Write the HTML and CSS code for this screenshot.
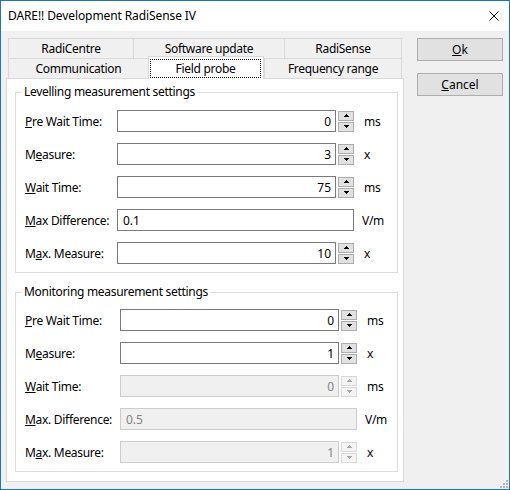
FILE: index.html
```html
<!DOCTYPE html>
<html lang="en">
<head>
  <meta charset="UTF-8">
  <title>DARE!! Development RadiSense IV</title>
  <link rel="stylesheet" href="styles.css">
</head>
<body>
  <div class="window">
    <div class="titlebar">
      <span class="title">DARE!! Development RadiSense IV</span>
      <svg class="close" width="10" height="10" viewBox="0 0 10 10">
        <path d="M0.5 0.5L9.5 9.5M9.5 0.5L0.5 9.5" stroke="#000" stroke-width="1"/>
      </svg>
    </div>

    <div class="client">
      <div class="tabcontrol">
        <div class="tabrow">
          <div class="tab t-radicentre">RadiCentre</div>
          <div class="tab t-software">Software update</div>
          <div class="tab t-radisense">RadiSense</div>
        </div>
        <div class="tabrow">
          <div class="tab t-comm">Communication</div>
          <div class="tab t-probe selected"><span class="focus">Field probe</span></div>
          <div class="tab t-freq">Frequency range</div>
        </div>

        <div class="panel">
          <fieldset class="group levelling">
            <legend>Levelling measurement settings</legend>
            <div class="row">
              <label><u>P</u>re Wait Time:</label>
              <input class="field" value="0">
              <div class="spin">
                <span><svg width="5" height="3"><path d="M2 0h1v1h1v1h1v1H0V2h1V1h1z"/></svg></span>
                <span><svg width="5" height="3"><path d="M0 0h5v1H4v1H3v1H2V2H1V1H0z"/></svg></span>
              </div>
              <span class="unit">ms</span>
            </div>
            <div class="row">
              <label>M<u>e</u>asure:</label>
              <input class="field" value="3">
              <div class="spin">
                <span><svg width="5" height="3"><path d="M2 0h1v1h1v1h1v1H0V2h1V1h1z"/></svg></span>
                <span><svg width="5" height="3"><path d="M0 0h5v1H4v1H3v1H2V2H1V1H0z"/></svg></span>
              </div>
              <span class="unit">x</span>
            </div>
            <div class="row">
              <label><u>W</u>ait Time:</label>
              <input class="field" value="75">
              <div class="spin">
                <span><svg width="5" height="3"><path d="M2 0h1v1h1v1h1v1H0V2h1V1h1z"/></svg></span>
                <span><svg width="5" height="3"><path d="M0 0h5v1H4v1H3v1H2V2H1V1H0z"/></svg></span>
              </div>
              <span class="unit">ms</span>
            </div>
            <div class="row">
              <label><u>M</u>ax Difference:</label>
              <input class="field wide" value="0.1">
              <span class="unit">V/m</span>
            </div>
            <div class="row">
              <label>M<u>a</u>x. Measure:</label>
              <input class="field" value="10">
              <div class="spin">
                <span><svg width="5" height="3"><path d="M2 0h1v1h1v1h1v1H0V2h1V1h1z"/></svg></span>
                <span><svg width="5" height="3"><path d="M0 0h5v1H4v1H3v1H2V2H1V1H0z"/></svg></span>
              </div>
              <span class="unit">x</span>
            </div>
          </fieldset>

          <fieldset class="group monitoring">
            <legend>Monitoring measurement settings</legend>
            <div class="row">
              <label><u>P</u>re Wait Time:</label>
              <input class="field" value="0">
              <div class="spin">
                <span><svg width="5" height="3"><path d="M2 0h1v1h1v1h1v1H0V2h1V1h1z"/></svg></span>
                <span><svg width="5" height="3"><path d="M0 0h5v1H4v1H3v1H2V2H1V1H0z"/></svg></span>
              </div>
              <span class="unit">ms</span>
            </div>
            <div class="row">
              <label>M<u>e</u>asure:</label>
              <input class="field" value="1">
              <div class="spin">
                <span><svg width="5" height="3"><path d="M2 0h1v1h1v1h1v1H0V2h1V1h1z"/></svg></span>
                <span><svg width="5" height="3"><path d="M0 0h5v1H4v1H3v1H2V2H1V1H0z"/></svg></span>
              </div>
              <span class="unit">x</span>
            </div>
            <div class="row">
              <label><u>W</u>ait Time:</label>
              <input class="field" value="0" disabled>
              <div class="spin off">
                <span><svg width="5" height="3"><path d="M2 0h1v1h1v1h1v1H0V2h1V1h1z"/></svg></span>
                <span><svg width="5" height="3"><path d="M0 0h5v1H4v1H3v1H2V2H1V1H0z"/></svg></span>
              </div>
              <span class="unit">ms</span>
            </div>
            <div class="row">
              <label><u>M</u>ax. Difference:</label>
              <input class="field wide" value="0.5" disabled>
              <span class="unit">V/m</span>
            </div>
            <div class="row">
              <label>M<u>a</u>x. Measure:</label>
              <input class="field" value="1" disabled>
              <div class="spin off">
                <span><svg width="5" height="3"><path d="M2 0h1v1h1v1h1v1H0V2h1V1h1z"/></svg></span>
                <span><svg width="5" height="3"><path d="M0 0h5v1H4v1H3v1H2V2H1V1H0z"/></svg></span>
              </div>
              <span class="unit">x</span>
            </div>
          </fieldset>
        </div>
      </div>

      <div class="actions">
        <button type="button"><u>O</u>k</button>
        <button type="button"><u>C</u>ancel</button>
      </div>
    </div>

    <svg class="grip" width="9" height="9" viewBox="0 0 9 9">
      <g fill="#b4b4b4">
        <rect x="7" y="1" width="2" height="2"/>
        <rect x="4" y="4" width="2" height="2"/>
        <rect x="7" y="4" width="2" height="2"/>
        <rect x="1" y="7" width="2" height="2"/>
        <rect x="4" y="7" width="2" height="2"/>
        <rect x="7" y="7" width="2" height="2"/>
      </g>
    </svg>
  </div>
</body>
</html>
```

FILE: styles.css
```css
body {
  margin: 0;
  font-family: "Noto Sans", "Open Sans", sans-serif;
  font-size: 12px;
  letter-spacing: -0.3px;
  color: #000;
}

.window {
  position: relative;
  width: 510px;
  height: 490px;
  box-sizing: border-box;
  border: 1px solid #1f74c0;
  background: #f0f0f0;
  display: flex;
  flex-direction: column;
}

.titlebar {
  height: 30px;
  background: #fff;
  display: flex;
  align-items: center;
  justify-content: space-between;
  padding: 0 10px 0 7px;
}

.title {
  line-height: 16px;
  letter-spacing: -0.1px;
}

.client {
  flex: 1;
  display: flex;
  padding: 7px 6px 7px 5px;
}

/* tab control */
.tabcontrol {
  width: 398px;
  display: flex;
  flex-direction: column;
}

.tabrow {
  display: flex;
  height: 20px;
  margin: 0 2px;
}

.tab {
  box-sizing: border-box;
  border: 1px solid #d9d9d9;
  border-right: none;
  border-bottom: none;
  text-align: center;
  line-height: 19px;
  white-space: nowrap;
}

.tab:last-child {
  border-right: 1px solid #d9d9d9;
}

.t-radicentre { width: 125px; }
.t-software { width: 151px; }
.t-radisense { width: 118px; }
.t-comm { width: 140px; }
.t-probe { width: 116px; }
.t-freq { width: 138px; }

.tab.selected {
  position: relative;
  z-index: 1;
  height: 23px;
  margin-top: -2px;
  margin-bottom: -1px;
  background: #fff;
  border-right: 1px solid #d9d9d9;
  padding: 2px 2px 1px 1px;
}

.focus {
  display: block;
  box-sizing: border-box;
  height: 19px;
  line-height: 17px;
  border: 1px dotted #000;
}

.panel {
  flex: 1;
  background: #fff;
  border: 1px solid #d9d9d9;
  padding: 5px 5px 0 8px;
}

/* group boxes */
.group {
  margin: 0;
  border: 1px solid #dcdcdc;
  padding: 10px 0 8px 6px;
}

.group legend {
  padding: 0 2px;
  line-height: 16px;
}

.monitoring {
  margin-top: 11px;
  padding-top: 9px;
}

.row {
  display: flex;
  align-items: center;
  height: 22px;
  padding-left: 3px;
}

.row + .row {
  margin-top: 11px;
}

.row label {
  width: 92px;
  flex: none;
}

.monitoring .row label {
  width: 95px;
}

.field {
  box-sizing: border-box;
  width: 219px;
  height: 22px;
  margin: 0;
  padding: 0 4px;
  border: 1px solid #7a7a7a;
  border-radius: 0;
  background: #fff;
  font: inherit;
  letter-spacing: 0;
  color: #000;
  text-align: right;
  outline: none;
}

.field.wide {
  width: 237px;
  padding-left: 5px;
  text-align: left;
}

.field:disabled {
  background: #f0f0f0;
  border-color: #cccccc;
  color: #838383;
}

.spin {
  display: flex;
  flex-direction: column;
  gap: 1px;
  margin-left: 2px;
}

.spin span {
  box-sizing: border-box;
  width: 16px;
  height: 10px;
  border: 1px solid #adadad;
  background: #e1e1e1;
  display: flex;
  align-items: center;
  justify-content: center;
}

.spin svg {
  display: block;
  fill: #000;
  shape-rendering: crispEdges;
}

.spin.off span {
  border-color: #d9d9d9;
  background: #f4f4f4;
}

.spin.off svg {
  fill: #a6a6a6;
}

.unit {
  margin-left: 10px;
}

.wide + .unit {
  margin-left: 8px;
}

/* dialog buttons */
.actions {
  display: flex;
  flex-direction: column;
  gap: 12px;
  margin-left: 13px;
}

.actions button {
  width: 86px;
  height: 23px;
  padding: 0;
  border: 1px solid #adadad;
  border-radius: 0;
  background: #e1e1e1;
  font: inherit;
  color: #000;
}

.grip {
  position: absolute;
  right: 1px;
  bottom: 1px;
}
```
